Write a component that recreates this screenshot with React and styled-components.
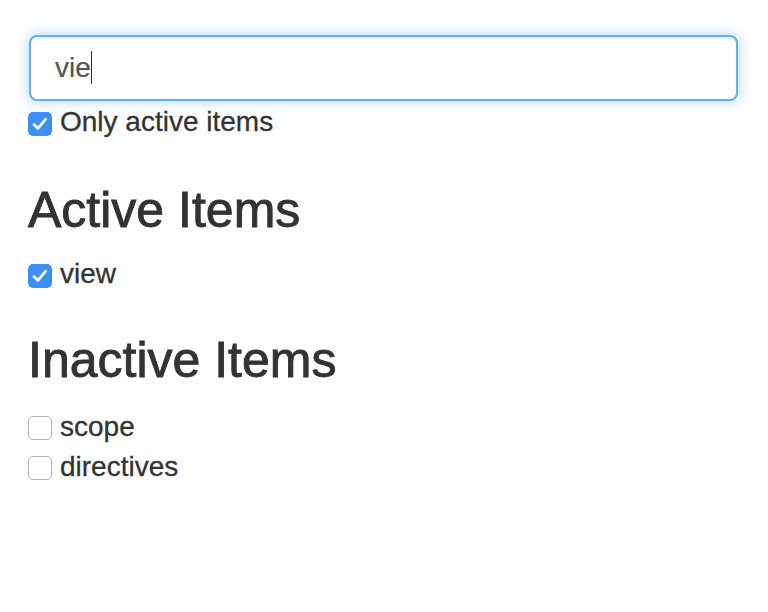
import React, { useState } from "react";
import styled, { createGlobalStyle } from "styled-components";

const GlobalStyle = createGlobalStyle`
  html, body {
    margin: 0;
    padding: 0;
    background: #ffffff;
  }
  body {
    font-family: "Liberation Sans", Arial, sans-serif;
    color: #333333;
  }
`;

const Page = styled.div`
  padding: 35px 30px 0 28px;
  width: 710px;
`;

const Field = styled.div`
  position: relative;
  width: 709px;
  margin-left: 1px;
`;

const SearchInput = styled.input`
  display: block;
  box-sizing: border-box;
  width: 100%;
  height: 66px;
  margin: 0;
  padding: 0 24px;
  border: 2px solid #66afe9;
  border-radius: 8px;
  outline: none;
  background: #ffffff;
  color: #555555;
  caret-color: transparent;
  font-family: "Liberation Sans", Arial, sans-serif;
  font-size: 28px;
  -webkit-text-stroke: 0.2px #555555;
  box-shadow: inset 0 2px 2px rgba(0, 0, 0, 0.075),
    0 0 14px rgba(102, 175, 233, 0.55);
`;

const Caret = styled.span`
  position: absolute;
  top: 16px;
  width: 1px;
  height: 33px;
  background: #333333;
  pointer-events: none;
`;

const Row = styled.label`
  display: flex;
  align-items: flex-start;
  height: 40px;
  line-height: 40px;
  font-size: 28px;
  color: #333333;
  -webkit-text-stroke: 0.3px #333333;
  cursor: pointer;
`;

const Box = styled.span`
  box-sizing: border-box;
  flex: none;
  width: 24px;
  height: 24px;
  margin-top: ${(p) => p.$top || 10}px;
  margin-right: 8px;
  border-radius: 5px;
  display: flex;
  align-items: center;
  justify-content: center;
  background: ${(p) => (p.$checked ? "#3b8ff6" : "#ffffff")};
  border: ${(p) => (p.$checked ? "none" : "1px solid #b4b4b4")};
  -webkit-text-stroke: 0;
`;

const Heading = styled.h3`
  margin: ${(p) => p.$top}px 0 ${(p) => p.$bottom}px 0;
  font-size: 50px;
  font-weight: 400;
  line-height: 55px;
  color: #333333;
  -webkit-text-stroke: 0.9px #333333;
`;

const Spacer = styled.div`
  height: 1px;
`;

function Check({ checked, top, onToggle }) {
  return (
    <Box $checked={checked} $top={top} onClick={onToggle}>
      {checked && (
        <svg width="18" height="16" viewBox="0 0 18 16">
          <path
            d="M3 8.6 L7 12.4 L14.6 3.2"
            fill="none"
            stroke="#ffffff"
            strokeWidth="2.8"
            strokeLinecap="round"
            strokeLinejoin="round"
          />
        </svg>
      )}
    </Box>
  );
}

export default function App() {
  const [query, setQuery] = useState("vie");
  const [onlyActive, setOnlyActive] = useState(true);
  const [items, setItems] = useState([
    { name: "view", active: true },
    { name: "scope", active: false },
    { name: "directives", active: false },
  ]);

  const toggle = (name) =>
    setItems((prev) =>
      prev.map((it) => (it.name === name ? { ...it, active: !it.active } : it))
    );

  const active = items.filter((it) => it.active);
  const inactive = items.filter((it) => !it.active);

  return (
    <Page>
      <GlobalStyle />
      <Field>
        <SearchInput value={query} onChange={(e) => setQuery(e.target.value)} />
        <Caret style={{ left: 26 + query.length * 11.9 }} />
      </Field>
      <Row style={{ marginTop: 1 }}>
        <Check checked={onlyActive} onToggle={() => setOnlyActive(!onlyActive)} />
        Only active items
      </Row>

      <Heading $top={41} $bottom={16}>Active Items</Heading>
      {active.map((it) => (
        <Row key={it.name}>
          <Check checked top={10} onToggle={() => toggle(it.name)} />
          {it.name}
        </Row>
      ))}

      <Heading $top={39} $bottom={19}>Inactive Items</Heading>
      {inactive.map((it) => (
        <Row key={it.name}>
          <Check checked={false} top={9} onToggle={() => toggle(it.name)} />
          {it.name}
        </Row>
      ))}
      <Spacer />
    </Page>
  );
}
